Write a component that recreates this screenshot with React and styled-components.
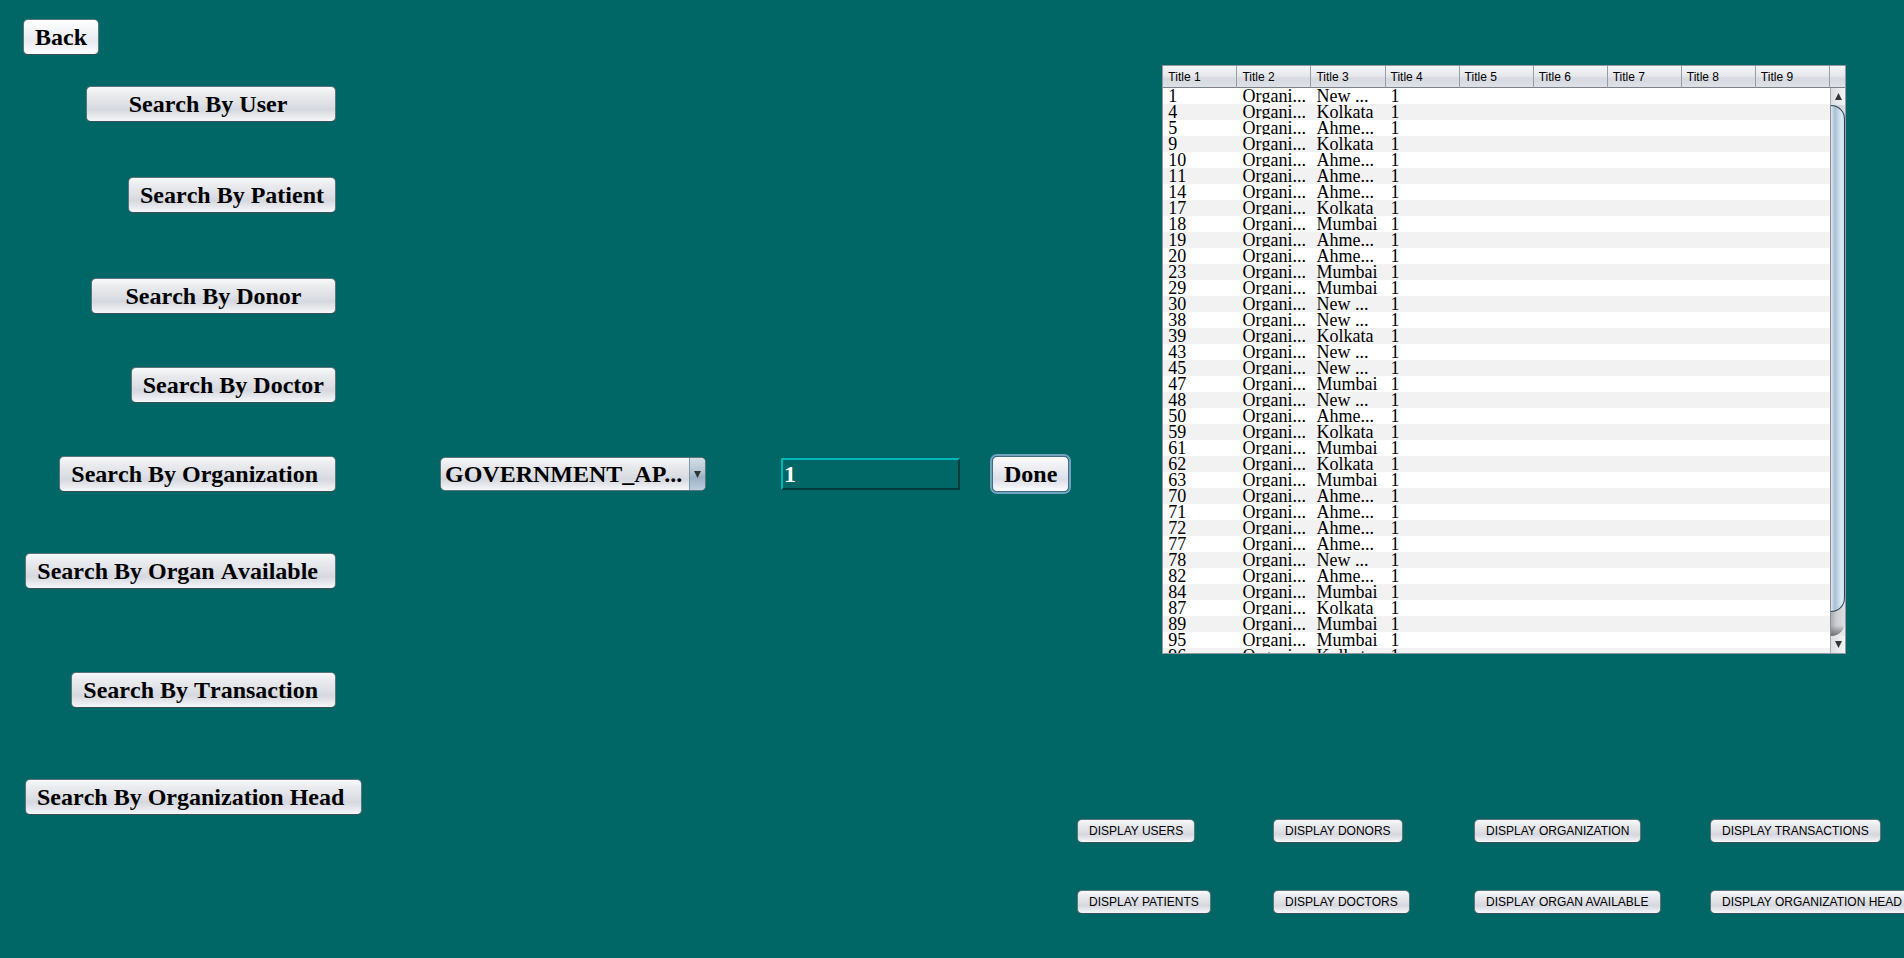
import React, { useState } from 'react';
import styled, { createGlobalStyle, css } from 'styled-components';

const serif = '"Liberation Serif", "Times New Roman", serif';
const sans = '"Liberation Sans", Arial, sans-serif';

const face =
  'linear-gradient(#f8f9fa 0%, #e9ebee 22%, #dfe1e6 48%, #d5d8df 66%, #e2e4e9 80%, #f6f7fa 100%)';
const faceHover =
  'linear-gradient(#ffffff 0%, #f4f5f8 30%, #e8eaf0 60%, #f2f3f7 80%, #ffffff 100%)';

const GlobalStyle = createGlobalStyle`
  * { box-sizing: border-box; }
  body { margin: 0; background: #006666; color: #000; }
`;

const Page = styled.div`
  display: flex;
  min-height: 100vh;
  overflow: hidden;
  background: #006666;
`;

const Sidebar = styled.aside`
  flex: none;
  width: 336px;
  padding: 19px 0 0 23px;
`;

const SearchNav = styled.nav`
  display: flex;
  flex-direction: column;
  align-items: flex-end;
  padding: 31px 0 0 2px;
`;

const PushButton = styled.button`
  height: 36px;
  padding: 0 11px;
  border: 1px solid #5d7478;
  border-bottom-color: #3c5155;
  border-radius: 5px;
  background: ${face};
  color: #000;
  font: bold 24px/28px ${serif};
  font-kerning: none;
  white-space: pre;
`;

const BackButton = styled(PushButton)`
  background: ${faceHover};
`;

const SearchButton = styled(PushButton)`
  flex: none;
  margin-top: ${(p) => p.$gap}px;
  min-width: ${(p) => (p.$width ? `${p.$width}px` : 'auto')};
  ${(p) => p.$start && css`align-self: flex-start;`}
`;

const DoneButton = styled(PushButton)`
  margin-left: 32px;
  border-color: #3f6d8a;
  background: linear-gradient(#fafafc 0%, #ececf2 35%, #dcdfe7 65%, #eceef3 85%, #ffffff 100%);
  box-shadow: 0 0 0 2px #73a4be;
`;

const Main = styled.main`
  flex: 1;
  min-width: 0;
  padding-top: 65px;
`;

const Workspace = styled.div`
  display: flex;
  align-items: flex-start;
  gap: 93px;
  padding: 0 58px 0 104px;
`;

const CriteriaForm = styled.form`
  display: flex;
  flex: none;
  align-items: center;
  padding-top: 391px;
`;

const SelectBox = styled.div`
  display: flex;
  width: 266px;
  height: 34px;
  border: 1px solid #5d7478;
  border-radius: 5px;
  background: ${face};
  overflow: hidden;
`;

const Select = styled.select`
  flex: 1;
  min-width: 0;
  padding: 0 0 0 4px;
  border: 0;
  appearance: none;
  background: none;
  color: #000;
  font: bold 24px/28px ${serif};
  outline: none;
`;

const SelectArrow = styled.span`
  display: flex;
  align-items: center;
  justify-content: center;
  width: 16px;
  border-left: 1px solid #7f97ab;
  background: linear-gradient(#d3dde6 0%, #b4c4d2 45%, #9db1c4 60%, #bccddc 100%);
  pointer-events: none;
`;

const TextField = styled.input`
  width: 179px;
  height: 32px;
  margin-left: 75px;
  padding: 0 1px;
  border: 2px solid;
  border-color: #00b8b8 #003c3c #003c3c #00b8b8;
  background: #006666;
  color: #fff;
  font: bold 24px/28px ${serif};
  outline: none;
`;

const TablePanel = styled.section`
  display: flex;
  flex: 1;
  min-width: 0;
  height: 589px;
  border: 1px solid #9297a1;
  background: #fff;
`;

const TableViewport = styled.div`
  flex: 1;
  min-width: 0;
  overflow: hidden;
`;

const DataTable = styled.table`
  width: 100%;
  table-layout: fixed;
  border-collapse: separate;
  border-spacing: 0;
`;

const headFace = css`
  height: 22px;
  border-bottom: 1px solid #7b828c;
  background: linear-gradient(#f4f5f7 0%, #e6e8eb 45%, #d6d9df 60%, #dee1e6 100%);
`;

const HeadCell = styled.th`
  ${headFace}
  padding: 0 5px;
  border-right: 1px solid #989da7;
  font: 12px/14px ${sans};
  text-align: left;
`;

const Row = styled.tr`
  background: #fff;
  &:nth-child(even) { background: #f2f2f2; }
`;

const Cell = styled.td`
  height: 16px;
  padding: 0 0 1px 5px;
`;

const CellText = styled.span`
  display: block;
  height: 15px;
  overflow: hidden;
  font: 18px/16px ${serif};
  font-kerning: none;
  white-space: pre;
`;

const ScrollColumn = styled.div`
  display: flex;
  flex-direction: column;
  width: 15px;
`;

const Corner = styled.div`
  ${headFace}
  flex: none;
`;

const ScrollButton = styled.button`
  display: flex;
  flex: none;
  align-items: center;
  justify-content: center;
  height: 17px;
  padding: 0;
  border: 0;
  border-left: 1px solid #a4a9b2;
  background: linear-gradient(90deg, #dcdee2, #f3f4f5);
`;

const Track = styled.div`
  flex: 1;
  border-left: 1px solid #8b9099;
  background:
    linear-gradient(transparent 98%, #6d7074 100%),
    linear-gradient(90deg, #a9acb0, #cdcfd2 40%, #dcdee1);
  border-bottom-right-radius: 14px;
`;

const TrackWell = styled.div`
  display: flex;
  flex: 1;
  background: #e6e8ea;
`;

const Thumb = styled.div`
  height: 95.5%;
  border: 1px solid #2c4656;
  border-left: 0;
  border-radius: 0 14px 14px 0;
  background: linear-gradient(90deg, #dde6ee 0%, #a9bfd2 30%, #b9cede 45%, #d9ebf6 80%, #c9deec 100%);
`;

const DisplayGrid = styled.div`
  display: grid;
  grid-template-columns: 196px 201px 236px max-content;
  row-gap: 47px;
  justify-items: start;
  padding: 165px 0 44px 741px;
`;

const DisplayButton = styled(PushButton)`
  height: 24px;
  font: 12px/14px ${sans};
  font-kerning: normal;
`;

const searches = [
  { label: 'Search By User ', gap: 0, width: 250 },
  { label: 'Search By Patient', gap: 55 },
  { label: 'Search By Donor', gap: 65, width: 245 },
  { label: 'Search By Doctor', gap: 53 },
  { label: 'Search By Organization ', gap: 53 },
  { label: 'Search By Organ Available ', gap: 61 },
  { label: 'Search By Transaction ', gap: 83 },
  { label: 'Search By Organization Head ', gap: 71, start: true },
];

const displays = [
  'DISPLAY USERS',
  'DISPLAY DONORS',
  'DISPLAY ORGANIZATION',
  'DISPLAY TRANSACTIONS',
  'DISPLAY PATIENTS',
  'DISPLAY DOCTORS',
  'DISPLAY ORGAN AVAILABLE',
  'DISPLAY ORGANIZATION HEAD',
];

const columns = [1, 2, 3, 4, 5, 6, 7, 8, 9];

const N = 'New ...';
const K = 'Kolkata';
const A = 'Ahme...';
const M = 'Mumbai';

const rows = [
  [1, N], [4, K], [5, A], [9, K], [10, A], [11, A], [14, A], [17, K], [18, M],
  [19, A], [20, A], [23, M], [29, M], [30, N], [38, N], [39, K], [43, N], [45, N],
  [47, M], [48, N], [50, A], [59, K], [61, M], [62, K], [63, M], [70, A], [71, A],
  [72, A], [77, A], [78, N], [82, A], [84, M], [87, K], [89, M], [95, M], [96, K],
];

function Triangle({ down }) {
  return (
    <svg width="7" height="7" viewBox="0 0 7 7" aria-hidden="true">
      <path d={down ? 'M0 0H7L3.5 7Z' : 'M0 7H7L3.5 0Z'} fill="#333639" />
    </svg>
  );
}

export default function App() {
  const [value, setValue] = useState('1');
  return (
    <>
      <GlobalStyle />
      <Page>
        <Sidebar>
          <BackButton type="button">Back</BackButton>
          <SearchNav>
            {searches.map((s) => (
              <SearchButton
                key={s.label}
                type="button"
                $gap={s.gap}
                $width={s.width}
                $start={s.start}
              >
                {s.label}
              </SearchButton>
            ))}
          </SearchNav>
        </Sidebar>
        <Main>
          <Workspace>
            <CriteriaForm onSubmit={(e) => e.preventDefault()}>
              <SelectBox>
                <Select aria-label="Organization type" defaultValue="gov">
                  <option value="gov">GOVERNMENT_AP...</option>
                </Select>
                <SelectArrow>
                  <Triangle down />
                </SelectArrow>
              </SelectBox>
              <TextField
                aria-label="Value"
                value={value}
                onChange={(e) => setValue(e.target.value)}
              />
              <DoneButton type="submit">Done</DoneButton>
            </CriteriaForm>
            <TablePanel>
              <TableViewport>
                <DataTable>
                  <thead>
                    <tr>
                      {columns.map((c) => (
                        <HeadCell key={c} scope="col">{`Title ${c}`}</HeadCell>
                      ))}
                    </tr>
                  </thead>
                  <tbody>
                    {rows.map(([id, city]) => (
                      <Row key={id}>
                        {[id, 'Organi...', city, 1, '', '', '', '', ''].map((text, i) => (
                          <Cell key={i}>
                            <CellText>{text}</CellText>
                          </Cell>
                        ))}
                      </Row>
                    ))}
                  </tbody>
                </DataTable>
              </TableViewport>
              <ScrollColumn>
                <Corner />
                <ScrollButton type="button" aria-label="Scroll up">
                  <Triangle />
                </ScrollButton>
                <TrackWell>
                  <Track>
                    <Thumb />
                  </Track>
                </TrackWell>
                <ScrollButton type="button" aria-label="Scroll down">
                  <Triangle down />
                </ScrollButton>
              </ScrollColumn>
            </TablePanel>
          </Workspace>
          <DisplayGrid>
            {displays.map((d) => (
              <DisplayButton key={d} type="button">{d}</DisplayButton>
            ))}
          </DisplayGrid>
        </Main>
      </Page>
    </>
  );
}
